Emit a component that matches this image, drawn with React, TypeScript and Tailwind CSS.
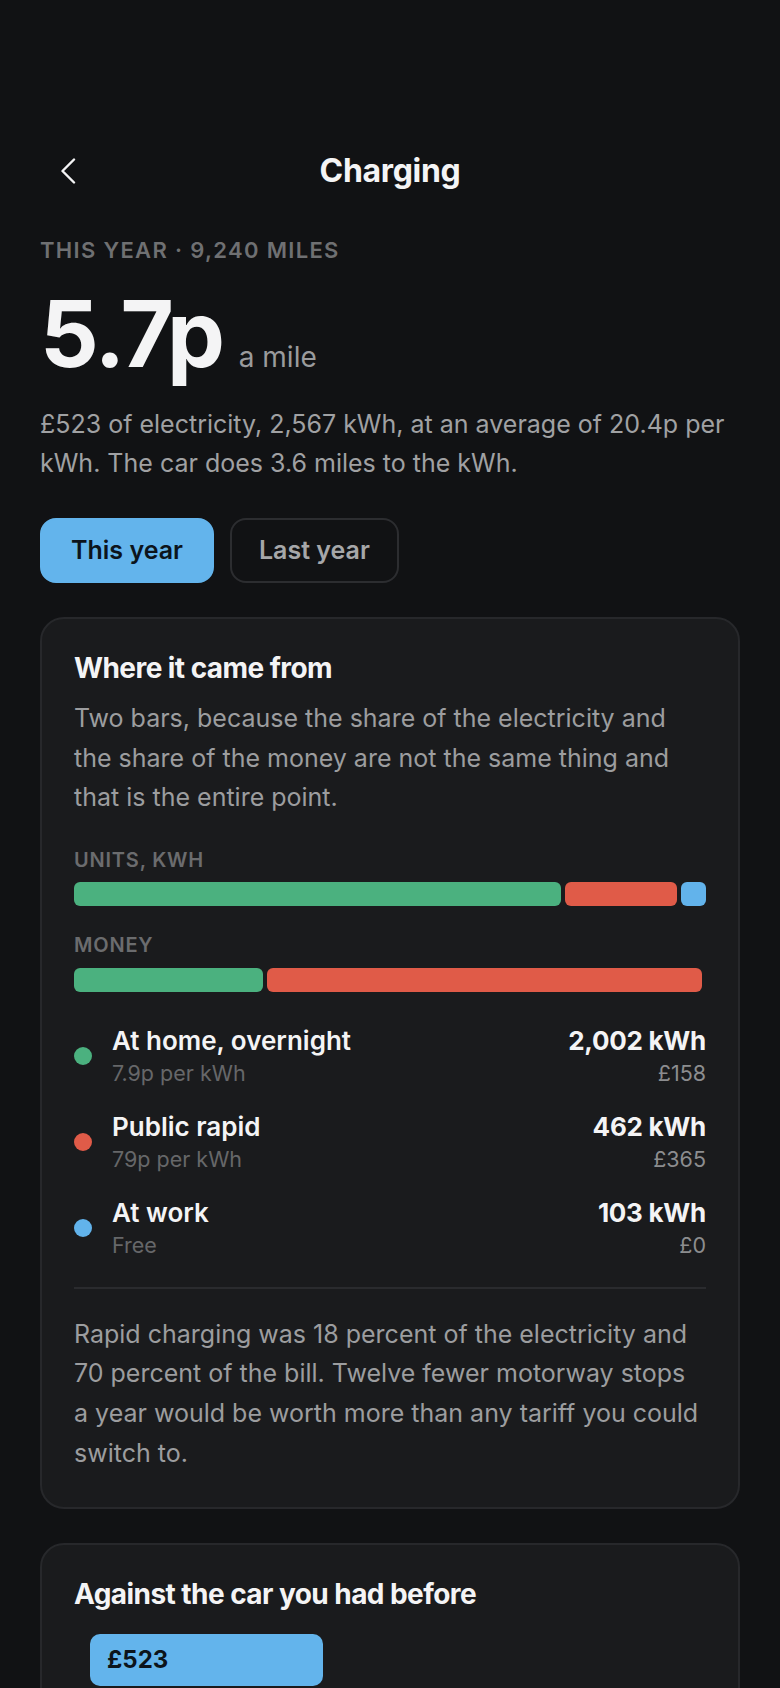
import React from "react";

const GREEN = "#4bb17f";
const RED = "#e05b48";
const BLUE = "#62b3eb";

type Source = { name: string; rate: string; kwh: number; cost: number; color: string; kwhLabel: string; costLabel: string };

const sources: Source[] = [
  { name: "At home, overnight", rate: "7.9p per kWh", kwh: 2002, cost: 158, color: GREEN, kwhLabel: "2,002 kWh", costLabel: "£158" },
  { name: "Public rapid", rate: "79p per kWh", kwh: 462, cost: 365, color: RED, kwhLabel: "462 kWh", costLabel: "£365" },
  { name: "At work", rate: "Free", kwh: 103, cost: 0, color: BLUE, kwhLabel: "103 kWh", costLabel: "£0" },
];

function StackBar({ field }: { field: "kwh" | "cost" }) {
  return (
    <div className="flex h-[24px] gap-[4px]">
      {sources.map((s) => (
        <div
          key={s.name}
          className="h-full rounded-[6px]"
          style={{ flexGrow: s[field], flexBasis: 0, flexShrink: 1, backgroundColor: s.color }}
        />
      ))}
    </div>
  );
}

export default function App() {
  return (
    <div className="h-[1688px] overflow-hidden bg-[#111214] text-[#f4f4f5] [font-family:Inter,'Noto_Sans',sans-serif]">
      <div className="px-[40px] pt-[147px]">
        {/* Header */}
        <div className="grid h-[48px] grid-cols-[48px_1fr_48px] items-center">
          <div className="flex items-center">
            <svg width="16" height="26" viewBox="0 0 16 26" fill="none" className="ml-[20px]">
              <path d="M14 1.5 L2.5 13 L14 24.5" stroke="#f4f4f5" strokeWidth="2.4" strokeLinecap="round" strokeLinejoin="round" />
            </svg>
          </div>
          <div className="text-center text-[32px] font-bold leading-[36px] tracking-[-0.01em]">Charging</div>
          <div />
        </div>

        {/* Summary */}
        <div className="mt-[40px] text-[22px] font-semibold uppercase leading-[30px] tracking-[0.06em] text-[#6f7072]">
          This year · 9,240 miles
        </div>
        <div className="mt-[23px] flex items-baseline">
          <span className="text-[92px] font-bold leading-none tracking-[-0.025em]">5.7p</span>
          <span className="ml-[16px] text-[28px] leading-none text-[#9a9b9d]">a mile</span>
        </div>
        <p className="mt-[25px] text-[25px] leading-[39px] text-[#a0a1a3]">
          £523 of electricity, 2,567 kWh, at an average of 20.4p per kWh. The car does 3.6 miles to the kWh.
        </p>

        {/* Toggle */}
        <div className="mt-[35px] flex gap-[16px]">
          <button className="h-[65px] rounded-[16px] border-2 border-[#63b4ec] bg-[#63b4ec] px-[29px] text-[25px] font-semibold text-[#0c141c]">
            This year
          </button>
          <button className="h-[65px] rounded-[16px] border-2 border-[#2c2d30] bg-transparent px-[27px] text-[25px] font-semibold text-[#a6a7a9]">
            Last year
          </button>
        </div>

        {/* Card 1 */}
        <div className="mt-[34px] rounded-[24px] border-2 border-[#27282b] bg-[#1a1b1d] px-[32px] pb-[34px] pt-[32px]">
          <h2 className="text-[28px] font-bold leading-[35px] tracking-[-0.02em]">Where it came from</h2>
          <p className="mt-[13px] text-[25px] leading-[39.5px] text-[#9c9d9f]">
            Two bars, because the share of the electricity and the share of the money are not the same thing and that is the entire point.
          </p>

          <div className="mt-[28px] text-[20px] font-semibold uppercase leading-[28px] tracking-[0.04em] text-[#6b6c6e]">
            Units, kWh
          </div>
          <div className="mt-[8px]">
            <StackBar field="kwh" />
          </div>
          <div className="mt-[25px] text-[20px] font-semibold uppercase leading-[28px] tracking-[0.04em] text-[#6b6c6e]">
            Money
          </div>
          <div className="mt-[9px]">
            <StackBar field="cost" />
          </div>

          <div className="mt-[33px] flex flex-col gap-[24px]">
            {sources.map((s) => (
              <div key={s.name} className="flex items-center">
                <div className="h-[18px] w-[18px] shrink-0 rounded-full" style={{ backgroundColor: s.color }} />
                <div className="ml-[20px] flex-1">
                  <div className="text-[26px] font-semibold leading-[32px]">{s.name}</div>
                  <div className="mt-[2px] text-[21.5px] leading-[28px] text-[#666769]">{s.rate}</div>
                </div>
                <div className="text-right">
                  <div className="text-[26px] font-bold leading-[32px] tracking-[-0.01em]">{s.kwhLabel}</div>
                  <div className="mt-[2px] text-[21.5px] leading-[28px] text-[#8c8d8f]">{s.costLabel}</div>
                </div>
              </div>
            ))}
          </div>

          <div className="mt-[28px] h-[2px] bg-[#2a2b2e]" />
          <p className="mt-[26px] text-[25px] leading-[39.7px] text-[#9c9d9f]">
            Rapid charging was 18 percent of the electricity and 70 percent of the bill. Twelve fewer motorway stops a year would be worth more than any tariff you could switch to.
          </p>
        </div>

        {/* Card 2 */}
        <div className="mt-[34px] rounded-[24px] border-2 border-[#27282b] bg-[#1a1b1d] px-[32px] pb-[34px] pt-[32px]">
          <h2 className="text-[28px] font-bold leading-[35px] tracking-[-0.02em]">Against the car you had before</h2>
          <div className="mt-[22px] pl-[16px]">
            <div className="flex h-[52px] w-[233px] items-center rounded-[10px] bg-[#63b4ec] px-[17px] text-[24px] font-bold leading-[30px] text-[#0c141c]">
              £523
            </div>
          </div>
        </div>
      </div>
    </div>
  );
}
